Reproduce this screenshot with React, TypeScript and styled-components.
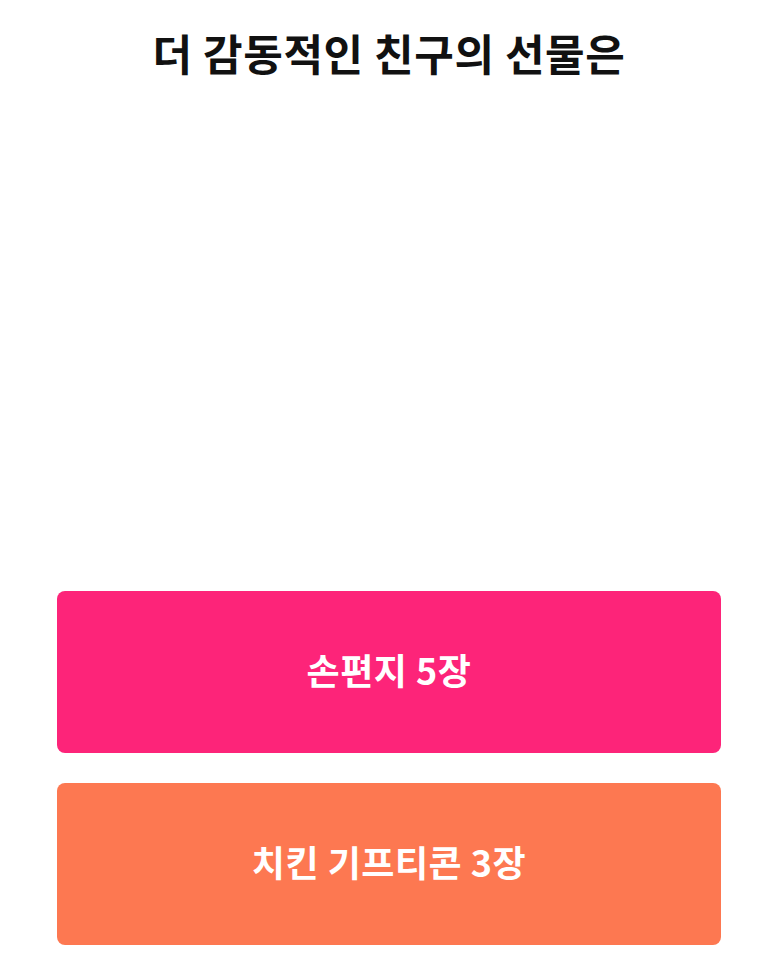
import styled, { createGlobalStyle } from 'styled-components';

const GlobalStyle = createGlobalStyle`
  html, body {
    margin: 0;
    padding: 0;
    background: #ffffff;
  }
  body {
    font-family: "Noto Sans CJK KR", "Noto Sans", sans-serif;
  }
`;

const Page = styled.div`
  display: flex;
  flex-direction: column;
  min-height: 966px;
  box-sizing: border-box;
  padding: 0 52px 21px 57px;
`;

const Title = styled.h1`
  margin: 0;
  padding-top: 24px;
  font-size: 43px;
  font-weight: 700;
  letter-spacing: 0.6px;
  color: #111111;
  text-align: center;
  line-height: 56px;
`;

const Spacer = styled.div`
  flex: 1;
`;

const Choices = styled.div`
  display: flex;
  flex-direction: column;
  gap: 30px;
`;

const Choice = styled.button<{ $tone: string }>`
  height: 162px;
  padding: 0 0 6px;
  border: none;
  border-radius: 8px;
  background: ${(p) => p.$tone};
  color: #ffffff;
  font-family: inherit;
  font-size: 36px;
  font-weight: 700;
  letter-spacing: 0.5px;
  cursor: pointer;
`;

const options = [
  { label: '손편지 5장', tone: '#fd2479' },
  { label: '치킨 기프티콘 3장', tone: '#fd7851' },
];

export default function App() {
  return (
    <>
      <GlobalStyle />
      <Page>
        <Title>더 감동적인 친구의 선물은</Title>
        <Spacer />
        <Choices>
          {options.map((o) => (
            <Choice key={o.label} $tone={o.tone}>
              {o.label}
            </Choice>
          ))}
        </Choices>
      </Page>
    </>
  );
}
